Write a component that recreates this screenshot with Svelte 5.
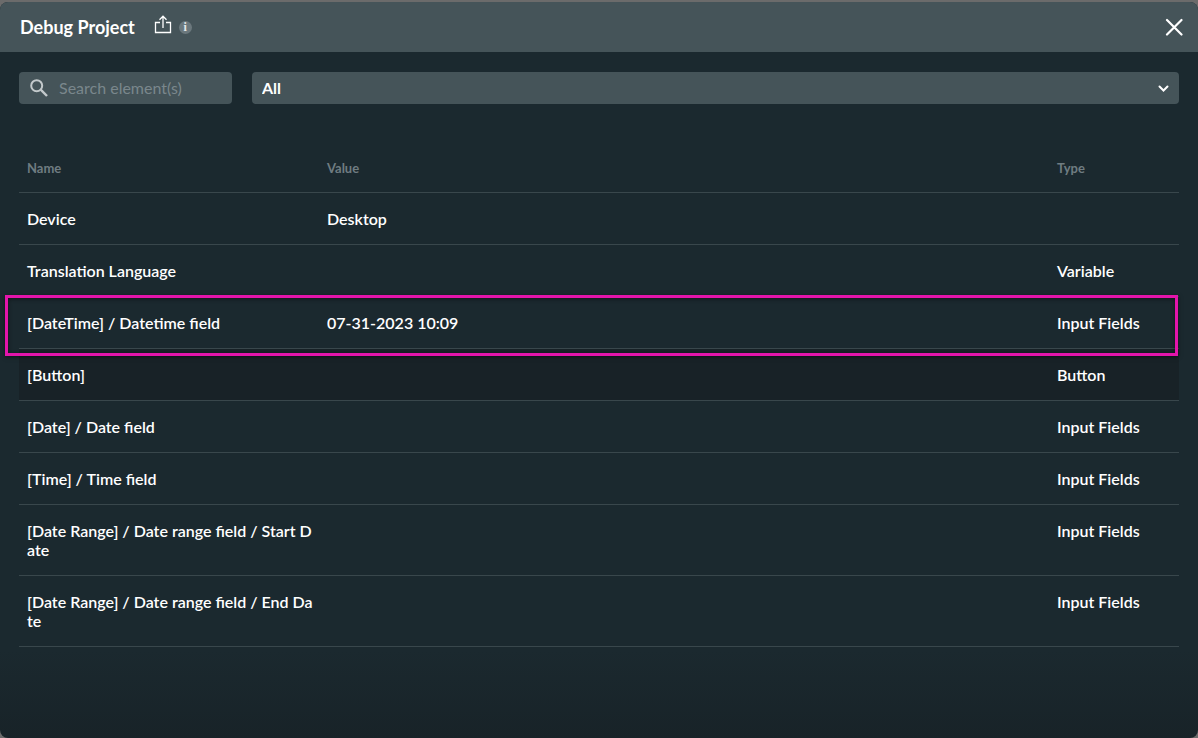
<script lang="ts">
    type Row = { name: string; value?: string; type?: string; marked?: boolean; hovered?: boolean };

    const rows: Row[] = [
        { name: "Device", value: "Desktop" },
        { name: "Translation Language", type: "Variable" },
        { name: "[DateTime] / Datetime field", value: "07-31-2023 10:09", type: "Input Fields", marked: true },
        { name: "[Button]", type: "Button", hovered: true },
        { name: "[Date] / Date field", type: "Input Fields" },
        { name: "[Time] / Time field", type: "Input Fields" },
        { name: "[Date Range] / Date range field / Start Date", type: "Input Fields" },
        { name: "[Date Range] / Date range field / End Date", type: "Input Fields" },
    ];

    const types = ["All", "Variable", "Input Fields", "Button"];

    let search = $state("");
    let selected = $state("All");

    let visible = $derived(
        rows.filter((row) =>
            row.name.toLowerCase().includes(search.toLowerCase()) &&
            (selected === "All" || row.type === selected)
        )
    );
</script>

<div class="modal">
    <header>
        <h1>Debug Project</h1>
        <button class="share" aria-label="Share">
            <svg width="18" height="20" viewBox="0 0 18 20" fill="none" stroke="currentColor" stroke-width="1.3">
                <path d="M6 7.5H1.5V17.5H16.5V7.5H12M9 13V2M5.5 4.7L9 1.2L12.5 4.7" />
            </svg>
        </button>
        <button class="info" aria-label="Info">i</button>
        <button class="close" aria-label="Close">
            <svg width="18" height="18" viewBox="0 0 18 18" fill="none" stroke="currentColor" stroke-width="2.2" stroke-linecap="round">
                <path d="M2 2L16.5 16.5M16.5 2L2 16.5" />
            </svg>
        </button>
    </header>

    <main>
        <div class="filters">
            <label class="search">
                <svg width="18" height="18" viewBox="0 0 18 18" fill="none" stroke="currentColor" stroke-width="2">
                    <circle cx="6.7" cy="6.7" r="5.5" />
                    <path d="M10.7 10.7L17 17" stroke-width="2.4" />
                </svg>
                <input type="text" placeholder="Search element(s)" aria-label="Search elements" bind:value={search}>
            </label>
            <div class="select">
                <select aria-label="Element type" bind:value={selected}>
                    {#each types as type}
                        <option>{type}</option>
                    {/each}
                </select>
                <svg width="12" height="8" viewBox="0 0 12 8" fill="none" stroke="currentColor" stroke-width="2" stroke-linecap="round">
                    <path d="M2.5 2.5L6.5 6.5L10.5 2.5" />
                </svg>
            </div>
        </div>

        <table>
            <thead>
                <tr>
                    <th class="name">Name</th>
                    <th>Value</th>
                    <th class="type">Type</th>
                </tr>
            </thead>
            <tbody>
                {#each visible as row}
                    <tr class:marked={row.marked} class:hovered={row.hovered}>
                        <td>{row.name}</td>
                        <td>{row.value ?? ""}</td>
                        <td>{row.type ?? ""}</td>
                    </tr>
                {/each}
            </tbody>
        </table>
    </main>
</div>

<style>
    :global(body) {
        background: #6b6b6b;
    }
    .modal {
        box-sizing: border-box;
        min-height: calc(100vh - 2px);
        margin-top: 2px;
        display: flex;
        flex-direction: column;
        overflow: hidden;
        border-radius: 8px;
        background: linear-gradient(to top, #182328, #1b292f 88px);
        color: #fff;
        font: 600 16px/19px Lato, sans-serif;
    }
    button, input, select {
        margin: 0;
        padding: 0;
        border: none;
        background: none;
        color: inherit;
        font: inherit;
    }
    button {
        cursor: pointer;
    }
    svg {
        display: block;
        flex: none;
    }
    header {
        display: flex;
        align-items: center;
        height: 50px;
        padding: 0 15px 0 20px;
        background: #455459;
    }
    h1 {
        margin: 0;
        font-size: 18px;
        line-height: 24px;
        font-weight: 700;
    }
    .share {
        margin: 0 7px 4px 19px;
    }
    .info {
        width: 13px;
        height: 13px;
        border-radius: 50%;
        background: #6b787d;
        color: #e4e8e9;
        font: 700 12px/13px "Liberation Serif", serif;
    }
    .close {
        margin-left: auto;
    }
    main {
        padding: 20px 19px;
    }
    .filters {
        display: flex;
        gap: 20px;
        margin-bottom: 40px;
    }
    .search {
        box-sizing: border-box;
        display: flex;
        align-items: center;
        gap: 11px;
        width: 213px;
        height: 32px;
        padding: 0 11px;
        border-radius: 4px;
        background: #455459;
        color: #c3c9cb;
        & input {
            flex: 1;
            min-width: 0;
            height: 30px;
            padding-bottom: 2px;
            box-sizing: border-box;
            outline: none;
            font-weight: 400;
        }
        & input::placeholder {
            color: #7a878c;
            opacity: 1;
        }
    }
    .select {
        flex: 1;
        display: grid;
        align-items: center;
        height: 32px;
        border-radius: 4px;
        background: #455459;
        & select, & svg {
            grid-area: 1 / 1;
        }
        & select {
            appearance: none;
            height: 32px;
            padding: 0 10px 2px;
            font-weight: 700;
        }
        & option {
            background: #455459;
        }
        & svg {
            justify-self: end;
            margin-right: 10px;
            pointer-events: none;
        }
    }
    table {
        width: 100%;
        table-layout: fixed;
        border-spacing: 0;
    }
    th, td {
        padding: 16px 4px 16px 8px;
        border-bottom: 1px solid #39474c;
        text-align: left;
        vertical-align: top;
    }
    th {
        color: #6f7c81;
        font-size: 13px;
        line-height: 16px;
        font-weight: 700;
    }
    td {
        word-break: break-all;
    }
    .name {
        width: 288px;
    }
    .type {
        width: 118px;
    }
    .hovered {
        background: #182227;
    }
    .marked {
        position: relative;
        & td:first-child::after {
            content: "";
            position: absolute;
            z-index: 1;
            inset: -2px 1px -7px -14px;
            border: 3px solid #e315ab;
            box-shadow: 0 1px 4px rgba(0, 0, 0, 0.5), inset 0 1px 4px rgba(0, 0, 0, 0.5);
            pointer-events: none;
        }
    }
</style>
